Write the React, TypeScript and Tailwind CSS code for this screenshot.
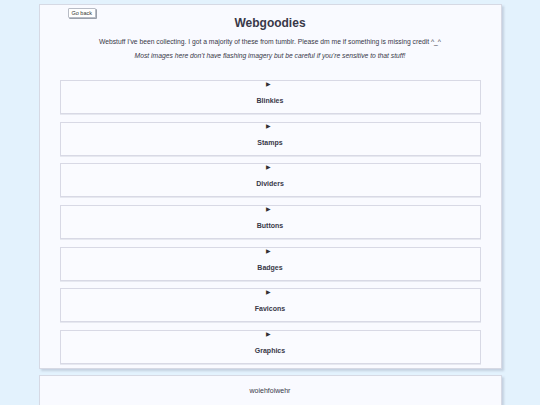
import React from 'react';

const sections = ['Blinkies', 'Stamps', 'Dividers', 'Buttons', 'Badges', 'Favicons', 'Graphics'];

const App: React.FC = () => {
  return (
    <div
      className="min-h-screen w-full bg-[#e3f2fd] text-[#383848] pt-[4px]"
      style={{ fontFamily: '"Liberation Sans", Arial, sans-serif' }}
    >
      {/* Main card */}
      <div className="mx-auto w-[463px] bg-[#f9faff] border border-[#d6d9e4] shadow-[2px_2px_2px_rgba(160,170,190,0.45)] px-[20px] pb-[4px]">
        <div className="h-[13px] pt-[3px] pl-[8px]">
          <button className="block h-[10px] px-[3px] bg-white border border-[#b8bcc6] rounded-[1px] shadow-[1px_1px_0_#9aa0aa] text-[5.5px] leading-[8px] text-[#333]">
            Go back
          </button>
        </div>
        <h1 className="text-center text-[12px] font-bold leading-[14px] mt-[-2px]">Webgoodies</h1>
        <p className="text-center text-[6.75px] leading-[9px] mt-[7px]">
          Webstuff I've been collecting. I got a majority of these from tumblr. Please dm me if something is missing credit ^_^
        </p>
        <p className="text-center text-[6.75px] leading-[9px] italic mt-[5px]">
          Most images here don't have flashing imagery but be careful if you're sensitive to that stuff!
        </p>

        <div className="flex flex-col gap-[7.7px] mt-[20px]">
          {sections.map((s) => (
            <div key={s} className="h-[34px] border border-[#d8d9e5] bg-[#fafbff] shadow-[0_1px_0_#e6e8f0] flex flex-col items-center">
              <span className="text-[6px] leading-[6px] mr-[3px] text-[#333]">▶</span>
              <span className="text-[7px] font-bold leading-[8px] mt-[10px]">{s}</span>
            </div>
          ))}
        </div>
      </div>

      {/* Second card */}
      <div className="mx-auto mt-[6px] w-[463px] h-[40px] bg-[#f9faff] border border-[#d6d9e4] shadow-[2px_2px_2px_rgba(160,170,190,0.45)] flex justify-center">
        <span className="text-[7px] leading-[8px] mt-[11px]">woiehfoiwehr</span>
      </div>
    </div>
  );
};

export default App;
